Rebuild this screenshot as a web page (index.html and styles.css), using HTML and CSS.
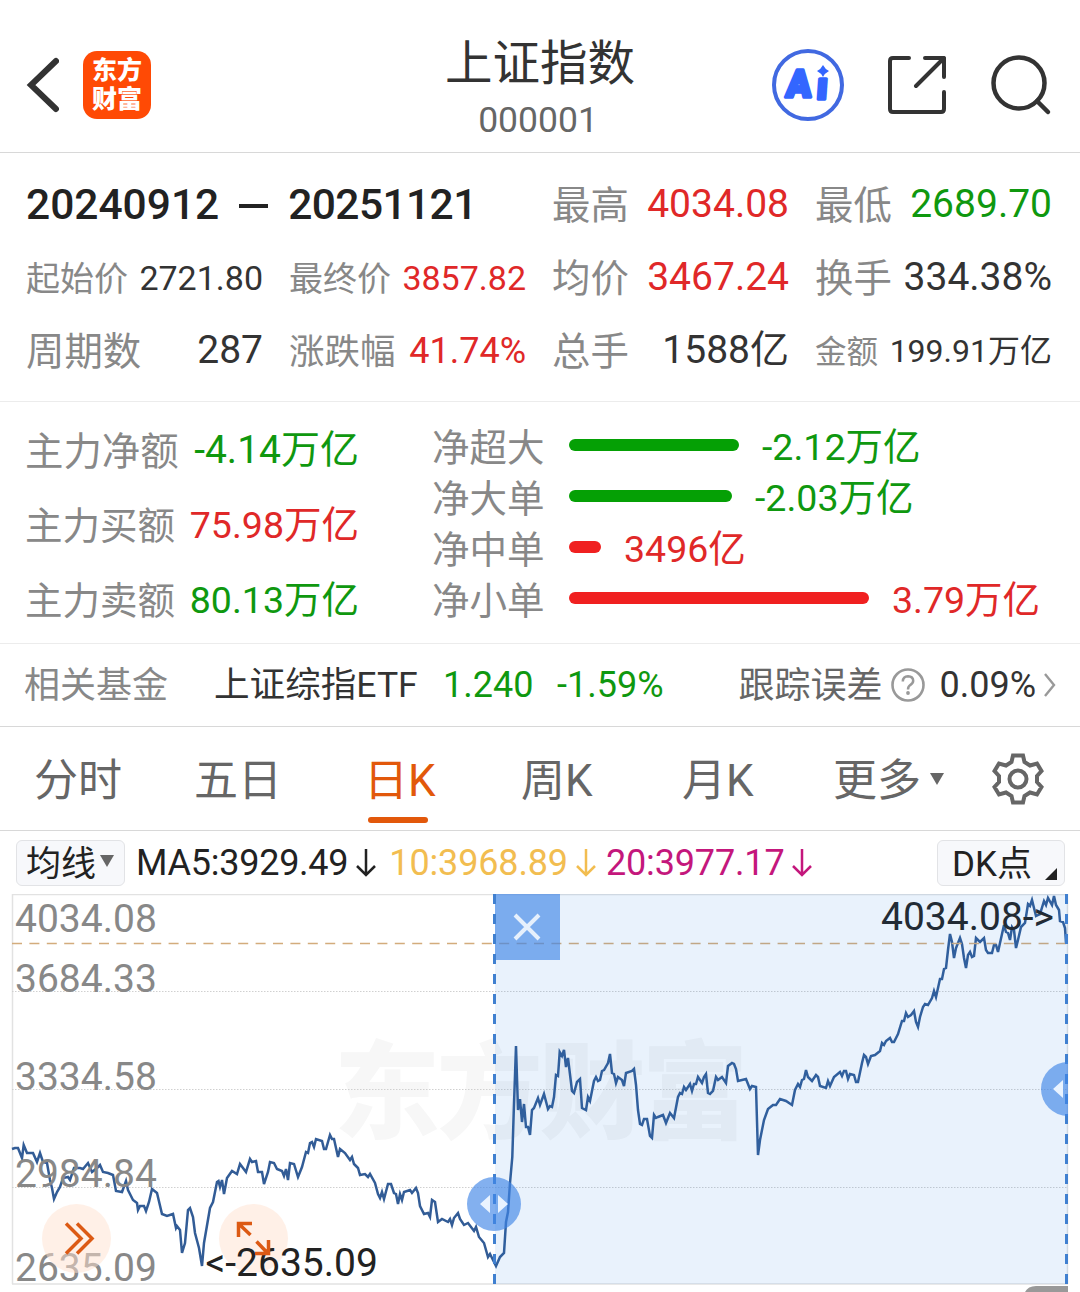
FILE: index.html
```html
<!DOCTYPE html>
<html lang="zh-CN">
<head>
    <meta charset="UTF-8">
    <meta name="viewport" content="width=device-width, initial-scale=1.0">
    <title>上证指数</title>
    <link rel="stylesheet" href="styles.css">
</head>
<body>
    <!-- Kopfzeile -->
    <header class="header">
        <div class="header-left">
            <svg class="back" width="34" height="56" viewBox="0 0 34 56"><path d="M31 4L6 28L31 52" fill="none" stroke="#333" stroke-width="6" stroke-linecap="round"/></svg>
            <div class="logo"><span>东方</span><span>财富</span></div>
        </div>
        <div class="header-title">
            <h1>上证指数</h1>
            <p>000001</p>
        </div>
        <div class="header-right">
            <svg width="72" height="72" viewBox="0 0 72 72">
                <circle cx="36" cy="36" r="34" fill="none" stroke="#4169e1" stroke-width="4"/>
                <text class="ai-text" x="17" y="48.500" transform="skewX(-4)" textLength="25" lengthAdjust="spacingAndGlyphs">A</text>
                <text class="ai-text" x="47.500" y="50" transform="skewX(-4)">ı</text>
                <path d="M51 16Q53 20 57 22Q53 24 51 28Q49 24 45 22Q49 20 51 16z" fill="#3366ff"/>
            </svg>
            <svg class="share" width="58" height="58" viewBox="0 0 58 58" fill="none" stroke="#333" stroke-width="4" stroke-linecap="round" stroke-linejoin="round">
                <path d="M21 2H5Q2 2 2 5V53Q2 56 5 56H53Q56 56 56 53V36M37 2H56V21M56 2L28 30"/>
            </svg>
            <svg class="search" width="62" height="62" viewBox="0 0 62 62" fill="none" stroke="#333" stroke-width="4.500" stroke-linecap="round">
                <circle cx="29" cy="29" r="25.500"/>
                <path d="M47 47L58 58"/>
            </svg>
        </div>
    </header>

    <!-- Zeitraum -->
    <section class="stats">
        <div class="range">20240912<i></i><span>20251121</span></div>
        <div class="cell"><span>最高</span><b class="red">4034.08</b></div>
        <div class="cell"><span>最低</span><b class="green">2689.70</b></div>
        <div class="cell s34"><span>起始价</span><b>2721.80</b></div>
        <div class="cell s34"><span>最终价</span><b class="red">3857.82</b></div>
        <div class="cell"><span>均价</span><b class="red">3467.24</b></div>
        <div class="cell"><span>换手</span><b>334.38%</b></div>
        <div class="cell"><span>周期数</span><b>287</b></div>
        <div class="cell s36"><span>涨跌幅</span><b class="red">41.74%</b></div>
        <div class="cell"><span>总手</span><b>1588亿</b></div>
        <div class="cell s32"><span>金额</span><b>199.91万亿</b></div>
    </section>

    <!-- Kapitalfluss -->
    <section class="flow">
        <div class="flow-main">
            <div class="cell"><span>主力净额</span><b class="green">-4.14万亿</b></div>
            <div class="cell s37"><span>主力买额</span><b class="red">75.98万亿</b></div>
            <div class="cell s37"><span>主力卖额</span><b class="green">80.13万亿</b></div>
        </div>
        <div class="flow-bars">
            <div class="bar-row"><span>净超大</span><i class="bar bg-green" style="width: 170px"></i><b class="green">-2.12万亿</b></div>
            <div class="bar-row"><span>净大单</span><i class="bar bg-green" style="width: 163px"></i><b class="green">-2.03万亿</b></div>
            <div class="bar-row"><span>净中单</span><i class="bar bg-red" style="width: 32px"></i><b class="red">3496亿</b></div>
            <div class="bar-row"><span>净小单</span><i class="bar bg-red" style="width: 300px"></i><b class="red">3.79万亿</b></div>
        </div>
    </section>

    <section class="fund">
        <span class="fund-label">相关基金</span>
        <span class="fund-name">上证综指ETF</span>
        <span class="fund-price green">1.240</span>
        <span class="green">-1.59%</span>
        <span class="fund-error">跟踪误差</span>
        <svg class="help" width="34" height="34" viewBox="0 0 34 34">
            <circle cx="17" cy="17" r="15.500" fill="none" stroke="#999" stroke-width="2.600"/>
            <path d="M11.800 13.500Q12 8.200 17 8.200Q22.200 8.400 22.200 12.800Q22.200 15.200 19.500 16.800Q17 18.500 17 21.500" fill="none" stroke="#999" stroke-width="2.500"/>
            <circle cx="17" cy="25" r="1.900" fill="#999"/>
        </svg>
        <span class="fund-value">0.09%</span>
        <svg class="more" width="12" height="24" viewBox="0 0 12 24"><path d="M1 1L10 12L1 23" fill="none" stroke="#999" stroke-width="2.400"/></svg>
    </section>

    <!-- Tabs -->
    <nav class="tabs">
        <a>分时</a>
        <a>五日</a>
        <a class="active">日K</a>
        <a>周K</a>
        <a>月K</a>
        <a>更多<i class="arrow"></i></a>
        <svg width="52" height="52" viewBox="0 0 52 52" fill="none" stroke="#666" stroke-width="4">
            <path d="M21 2.500H31L32.500 9L38 12.500L45 10.500L49.500 18L45 23V29L49.500 34L45 41.500L38 39.500L32.500 43L31 49.500H21L19.500 43L14 39.500L7 41.500L2.500 34L7 29V23L2.500 18L7 10.500L14 12.500L19.500 9Z"/>
            <circle cx="26" cy="26" r="8.500"/>
        </svg>
    </nav>

    <div class="ma">
        <button class="btn-ma">均线<i class="arrow"></i></button>
        <span class="ma5">MA5:3929.49<svg width="20" height="30" viewBox="0 0 20 30"><path d="M10 1V27M1 18L10 27L19 18"/></svg></span>
        <span class="ma10">10:3968.89<svg width="20" height="30" viewBox="0 0 20 30"><path d="M10 1V27M1 18L10 27L19 18"/></svg></span>
        <span class="ma20">20:3977.17<svg width="20" height="30" viewBox="0 0 20 30"><path d="M10 1V27M1 18L10 27L19 18"/></svg></span>
        <button class="btn-dk">DK点<i></i></button>
    </div>

    <!-- Chart -->
    <svg class="chart" width="1080" height="398" viewBox="0 894 1080 398">
        <text class="watermark" x="334" y="1130" textLength="414">东方财富</text>
        <g class="frame">
            <path d="M12 894.500H1068M12.500 894V1284M1067.500 894V1284M12 1284H1068"/>
        </g>
        <path class="grid" d="M12 991.500H1068M12 1089.500H1068M12 1187.500H1068"/>
        <polyline class="line" points="12,1149 15,1148 18,1148 22,1158 23.700,1145 27,1153 33,1153 37,1162 40,1153 43,1162 47,1163 50,1180 52,1188 54,1199 57,1192 60,1187 63,1178 68,1177 70,1180 74,1168 80,1168 83,1169 88,1163 92,1172 97,1168 100,1165 103,1172 108,1173 113,1175 116,1191 122,1192 126,1181 128,1190 133,1200 137,1203 138,1210 140,1206 144,1206 146,1211 149,1202 152,1189 157,1193 162,1214 167,1216 173,1214 176,1228 177,1226 180,1230 182,1253 185,1243 188,1210 190,1208 193,1217 195,1233 199,1248 202,1266 204,1243 210,1208 213,1202 217,1182 218.500,1181 220,1187 222,1180 224,1194 227,1178 232,1171 237,1174 240,1164 246,1172 250,1159 252,1162 256,1161 258,1172 262,1172 264,1184 268,1172 270,1162 274,1163 277,1169 282,1171 284,1176 286,1169 288,1180 290,1163 294,1164 298,1177 302,1167 306,1152 308,1153 310,1143 312,1142 314,1147 316,1139 322,1141 324,1149 326,1149 330,1135 332,1139 334,1139 338,1157 340,1149 345,1153 350,1160 352,1157 354,1164 358,1168 360,1175 365,1174 368,1177 370,1174 375,1183 378,1194 380,1198 382,1192 384,1199 388,1184 391,1184 394,1193 396,1194 398,1204 400,1194 402,1200 404,1192 410,1190 412,1193 416,1188 418,1193 420,1206 424,1214 428,1213 430,1217 432,1200 435,1202 438,1222 442,1219 448,1222 450,1219 452,1225 454,1218 458,1213 460,1219 464,1225 468,1223 474,1231 476,1227 479,1237 484,1243 488,1257 490,1254 496,1266 500,1257 504,1253 506,1222 508,1212 510,1183 512.300,1157 513.700,1113 516,1046 518,1110 520,1099 522,1122 524,1104 526,1127 528,1127 530,1135 532,1110 534,1108 538,1098 540,1105 544,1094 548,1109 550,1106 552,1107 554,1097 556,1075 558,1076 559.700,1052 562,1056 564,1050 566,1067 568,1058 572,1091 574,1093 577,1082 580,1079 582,1108 586,1110 588,1097 590,1101 594,1081 596,1077 598,1081 600,1080 602,1071 604,1070 608,1063 610,1054 612,1073 614,1074 616,1083 618,1077 622,1080 624,1086 626,1073 632,1071 634,1069 636,1085 638,1110 640,1124 642,1125 644,1119 647,1119 650,1136 652,1138 654,1115 656,1118 658,1117 663,1115 666,1123 670,1113 674,1118 678,1097 680,1093 682,1094 684,1087 686,1090 690,1084 692,1091 694,1084 696,1084 698,1077 702,1083 704,1077 706,1074 708,1093 710,1094 713,1091 716,1077 718,1080 722,1077 726,1083 728,1066 732,1063 734,1064 736,1069 738,1081 746,1079 750,1089 752,1086 756,1087 758,1155 760,1140 764,1120 768,1109 773,1105 776,1105 780,1099 786,1101 792,1105 795,1090 798,1084 800,1087 802,1080 804,1079 806,1070 808,1077 812,1081 816,1075 818,1077 820,1086 826,1088 828,1081 830,1086 834,1077 840,1072 842,1076 844,1071 846,1071 848,1079 850,1074 854,1075 856,1082 858,1082 862,1063 864,1055 866,1057 868,1064 871,1056 875,1055 880,1051 882,1043 884,1045 886,1041 890,1038 892,1042 894,1042 898,1034 902,1021 904,1021 906,1013 908,1017 911,1015 914,1011 916,1022 918,1027 920,1017 923,1007 925,1004 928,1005 932,998 934,991 936,997 940,979 942,979 944,969 946,968 948,950 950,934 952,942 954,958 956,948 960,938 962,944 964,958 966,968 968,955 970,952 972,957 974,956 976,938 980,942 984,938 986,950 988,953 992,953 994,945 996,945 998,952 1000,943 1004,925 1006,932 1008,933 1010,940 1012,927 1014,930 1016,948 1018,940 1021,927 1025,923 1028,904 1030,906 1032,900 1036,916 1040,914 1044,901 1046,905 1048,898 1052,905 1054,896 1056,905 1059,910 1060,921 1063,922 1065,928 1066,943"/>
        <path class="last" d="M12 943.500H1068"/>
        <g class="axis">
            <text x="15" y="932">4034.08</text>
            <text x="15" y="992">3684.33</text>
            <text x="15" y="1090">3334.58</text>
            <text x="15" y="1187">2984.84</text>
            <text x="15" y="1281">2635.09</text>
        </g>
        <text class="mark" x="881" y="930">4034.08-&gt;</text>

        <circle class="tool" cx="76.500" cy="1238.500" r="34.500"/>
        <path class="tool-icon" d="M66 1223.500L81 1238.500L66 1253.500M77 1223.500L92 1238.500L77 1253.500"/>
        <circle class="tool" cx="253.500" cy="1238.500" r="34.500"/>
        <text class="mark" x="205.500" y="1276">&lt;-2635.09</text>
        <path class="tool-icon" d="M250.500 1235L239 1224M252 1223.500H238.500V1237M256.500 1241.500L268 1253.500M255 1253.500H268.500V1240"/>

        <!-- Auswahl -->
        <rect x="495" y="894" width="573" height="390" fill="rgba(35, 125, 225, 0.1)"/>
        <rect x="495" y="894" width="65" height="66" fill="rgba(64, 134, 230, 0.65)"/>
        <path d="M515 915L539 939M539 915L515 939" stroke="#e6f0fc" stroke-width="4"/>
        <path class="edge" d="M494.500 894V1284M1066.500 894V1284"/>
        <circle cx="494" cy="1204" r="27" fill="rgba(64, 134, 230, 0.65)"/>
        <path d="M490 1195V1213L480 1204zM498 1195V1213L508 1204z" fill="#e9f3ff"/>
        <path d="M1068 1062A27 27 0 0 0 1068 1116z" fill="rgba(64, 134, 230, 0.65)"/>
        <path d="M1063 1080V1098L1053 1089z" fill="#e9f3ff"/>
        <path d="M1025 1292Q1028 1286 1036 1286H1068V1292z" fill="#999"/>
    </svg>
</body>
</html>
```
FILE: styles.css
```css
* {
    box-sizing: border-box;
}
body {
    margin: 0;
    width: 1080px;
    height: 1292px;
    overflow: hidden;
    background-color: #fff;
    color: #333;
    font-family: Roboto, "Noto Sans CJK SC", sans-serif;
    font-size: 39px;
    line-height: 1;
}
svg {
    display: block;
    flex: none;
}
b, i {
    font-weight: normal;
    font-style: normal;
}
.red {
    color: #e02828;
}
.green {
    color: #0f980f;
}
.bg-red {
    background-color: #f02020;
}
.bg-green {
    background-color: #05a005;
}

/* Header */
.header {
    display: grid;
    grid-template-columns: 1fr auto 1fr;
    height: 153px;
    border-bottom: 1px solid #d8d8d8;
}
.header-left {
    display: flex;
    align-items: center;
    gap: 24px;
    padding: 18px 0 0 25px;
}
.logo {
    display: flex;
    flex-direction: column;
    align-items: center;
    justify-content: center;
    gap: 2px;
    width: 68px;
    height: 68px;
    border-radius: 14px;
    background-color: #ff4a05;
    color: #fff;
    font-size: 25px;
    font-weight: 900;
    line-height: 27px;
}
.header-title {
    text-align: center;
}
.header-title h1 {
    margin: 35px 0 0;
    font-size: 47.500px;
    font-weight: normal;
    line-height: 58px;
}
.header-title p {
    margin: 7px 4px 0 0;
    color: #666;
    font-size: 35.500px;
    line-height: 40px;
}
.header-right {
    display: flex;
    align-items: center;
    justify-content: flex-end;
    padding: 18px 28px 0 0;
}
.share {
    margin: 0 44px;
}

/* Kennzahlen */
.stats {
    display: grid;
    grid-template-columns: repeat(4, 1fr);
    grid-auto-rows: 73px;
    column-gap: 26px;
    height: 249px;
    padding: 15px 28px 0 26px;
    border-bottom: 1px solid #ececec;
}
.range {
    display: flex;
    align-items: center;
    grid-column: span 2;
    padding-top: 2px;
    color: #222;
    font-size: 42.500px;
    font-weight: 500;
}
.range i {
    width: 29px;
    height: 4px;
    margin: 0 20px;
    background-color: #222;
}
.range span {
    letter-spacing: -0.600px;
}
.cell {
    display: flex;
    align-items: center;
    justify-content: space-between;
    white-space: nowrap;
}
.cell span,
.bar-row span {
    padding-top: 3px;
    color: #888;
    font-size: 0.985em;
}
.s37 {
    font-size: 37.500px;
}
.s36 {
    font-size: 36px;
}
.s34 {
    font-size: 34px;
}
.s32 {
    font-size: 32px;
}
.s37 span,
.s34 span {
    font-size: 1em;
}
.s36,
.s32 {
    padding-top: 1px;
}

/* Kapitalfluss */
.flow {
    display: flex;
    height: 242px;
    border-bottom: 1px solid #ececec;
}
.flow-main {
    display: grid;
    grid-auto-rows: 75px;
    width: 359px;
    padding: 11px 0 0 25px;
}
.flow-bars {
    margin-left: 73px;
    padding-top: 20px;
}
.bar-row {
    display: flex;
    align-items: center;
    height: 51px;
    font-size: 37.500px;
    white-space: nowrap;
}
.bar-row span {
    width: 137px;
    font-size: 1em;
}
.bar {
    height: 12px;
    margin: -5px 23px 0 0;
    border-radius: 6px;
}

/* Fonds */
.fund {
    display: flex;
    align-items: center;
    height: 83px;
    padding: 0 24px;
    border-bottom: 1px solid #d8d8d8;
    font-size: 36px;
    white-space: nowrap;
}
.fund-label {
    width: 190px;
    padding-top: 2px;
    color: #888;
}
.fund-name {
    width: 229px;
    padding-top: 1px;
    font-size: 35.600px;
}
.fund-price {
    width: 114px;
}
.fund-error {
    margin-left: auto;
    padding-top: 2px;
    color: #666;
}
.help {
    margin: 0 14px 0 9px;
}
.more {
    margin-left: 8px;
}

/* Tabs */
.tabs {
    display: grid;
    grid-template-columns: 160px 170px 157px 161px 151px 1fr auto;
    align-items: center;
    height: 104px;
    padding: 0 36px 0 34px;
    border-bottom: 1px solid #d8d8d8;
    color: #666;
    font-size: 44px;
}
.tabs a {
    position: relative;
    padding-top: 4px;
    line-height: 64px;
}
.tabs .active {
    color: #e2580b;
}
.tabs .active::after {
    content: "";
    position: absolute;
    left: 4px;
    bottom: -10px;
    width: 60px;
    height: 6px;
    border-radius: 3px;
    background-color: #e2580b;
}
.arrow {
    display: inline-block;
    border: 7.500px solid transparent;
    border-top: 12px solid #666;
    border-bottom: 0;
}
.tabs .arrow {
    margin-left: 9px;
    vertical-align: 11px;
}

/* Gleitende Durchschnitte */
.ma {
    display: flex;
    align-items: center;
    height: 63px;
    padding: 0 15px 0 16px;
    font-size: 36px;
    white-space: nowrap;
}
.ma span {
    display: flex;
    align-items: center;
}
.ma svg {
    margin-left: 8px;
    fill: none;
    stroke: currentColor;
    stroke-width: 2.500;
}
.ma button {
    display: flex;
    align-items: center;
    height: 46px;
    padding: 0 0 4px;
    border: 1px solid #e2e3e6;
    border-radius: 6px;
    background-color: #f7f8fb;
    color: #222;
    font-family: inherit;
    font-size: 35px;
}
.ma .btn-ma {
    width: 109px;
    padding-left: 9px;
}
.btn-ma .arrow {
    margin-left: 4px;
}
.ma5 {
    margin-left: 11px;
    color: #222;
    letter-spacing: -0.250px;
}
.ma10 {
    margin-left: 13px;
    color: #f2bd50;
    letter-spacing: -0.150px;
}
.ma20 {
    margin-left: 10px;
    color: #c4177c;
    letter-spacing: -0.150px;
}
.ma .btn-dk {
    width: 128px;
    margin-left: auto;
    padding-left: 14px;
}
.btn-dk i {
    margin: 26px 0 0 13px;
    border-left: 12px solid transparent;
    border-bottom: 12px solid #222;
}

/* Chart */
.ai-text {
    fill: #3366ff;
    stroke: #3366ff;
    stroke-width: 3.500;
    stroke-linejoin: round;
    font-size: 38px;
    font-weight: 900;
}
.watermark {
    fill: #f7f7f7;
    font-size: 106px;
    font-weight: 900;
}
.frame {
    fill: none;
    stroke: #e2e2e2;
    stroke-width: 1.500;
}
.grid {
    stroke: #d0d0d0;
    stroke-width: 1;
    stroke-dasharray: 1.500 1.500;
}
.line {
    fill: none;
    stroke: #325c96;
    stroke-width: 2.500;
}
.last {
    stroke: #d3ac7c;
    stroke-width: 1.500;
    stroke-dasharray: 10 7.400;
}
.axis {
    fill: #888;
    font-size: 39px;
}
.mark {
    fill: #222;
    font-size: 39px;
}
.tool {
    fill: rgba(255, 225, 208, 0.5);
}
.tool-icon {
    fill: none;
    stroke: #dc5a14;
    stroke-width: 3.500;
}
.edge {
    stroke: #4080d0;
    stroke-width: 3;
    stroke-dasharray: 10 10;
}
```
